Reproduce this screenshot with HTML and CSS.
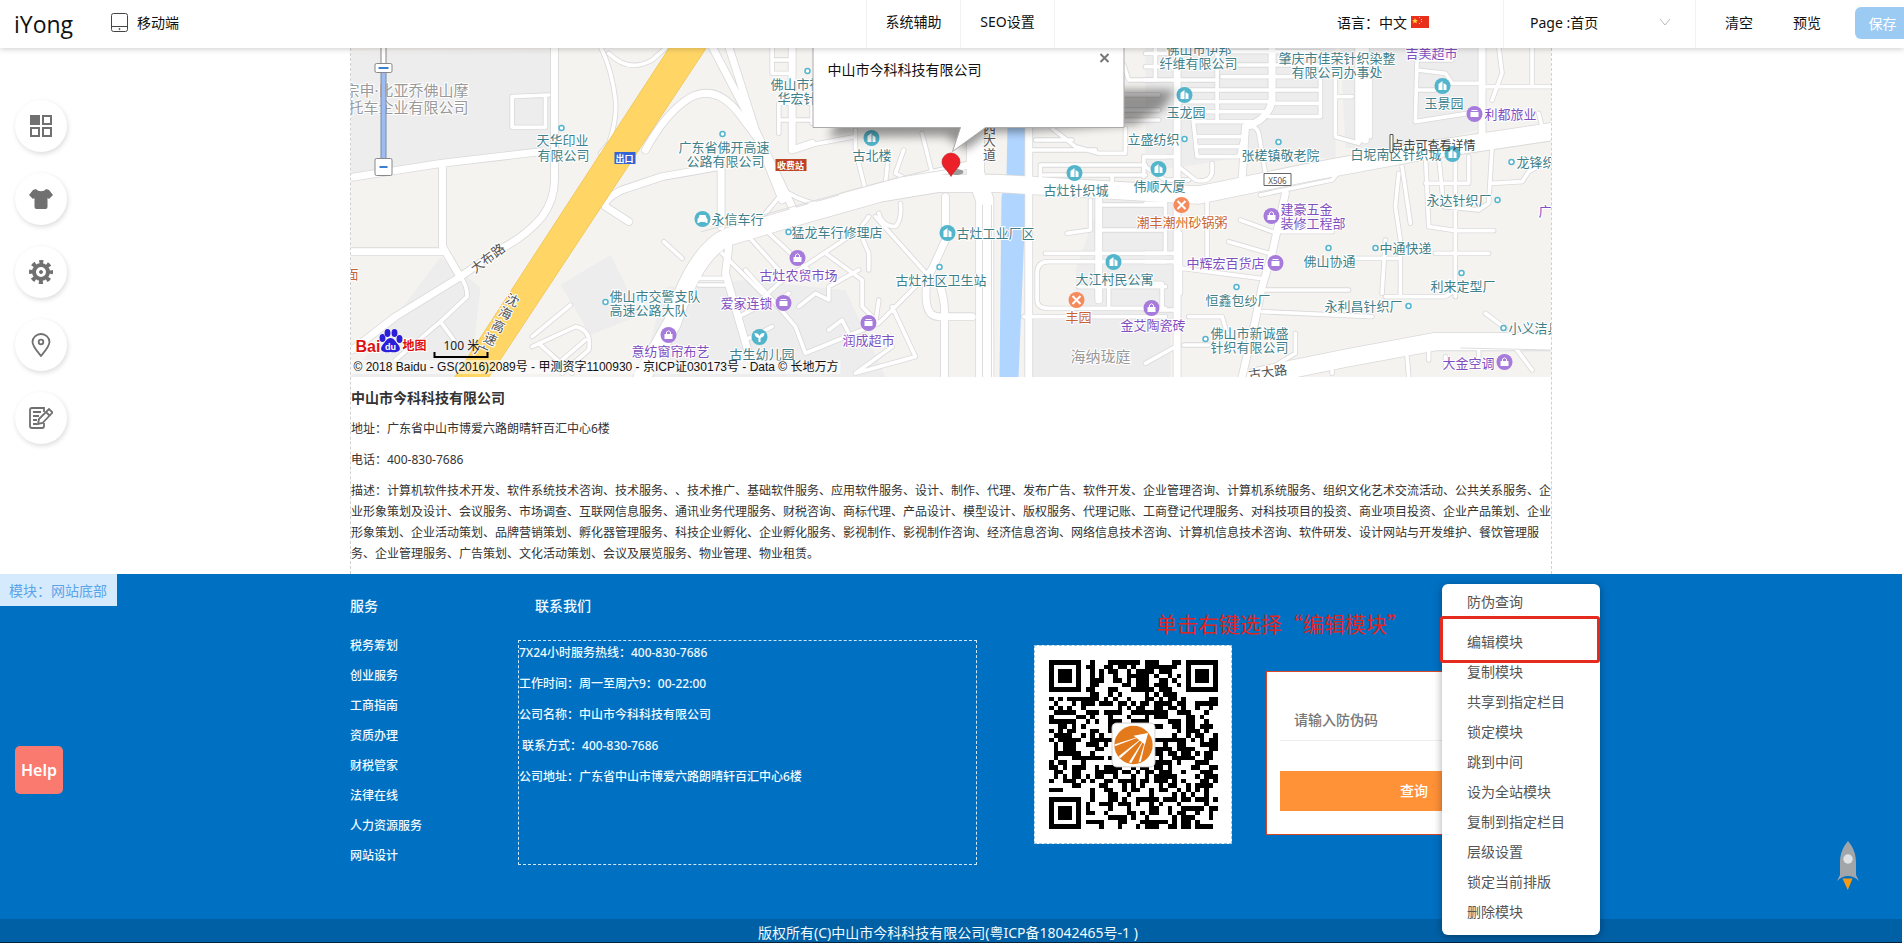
FILE: index.html
```html
<!DOCTYPE html>
<html lang="zh-CN">
<head>
<meta charset="utf-8">
<title>iYong</title>
<link rel="stylesheet" href="styles.css">
</head>
<body>
<header class="topbar">
  <div class="topbar-left">
    <a class="logo" href="#">iYong</a>
    <a class="device" href="#"><svg width="17" height="19" viewBox="0 0 17 19" fill="none" stroke="#444"><rect x=".5" y=".5" width="16" height="18" rx="2"/><path d="M.5 13.5h16"/><circle cx="8.500" cy="16" r=".6"/></svg>移动端</a>
  </div>
  <nav class="tabs"><a href="#">系统辅助</a><a href="#">SEO设置</a></nav>
  <div class="topbar-right">
    <button class="plain lang" type="button">语言：中文 <svg width="18" height="12" viewBox="0 0 18 12"><path fill="#e8301c" d="M0 0h18v12H0z"/><path fill="#ffd83b" d="M4 2l.8 2 2 .1-1.500 1.300.6 2L4 6.300 2.100 7.400l.6-2L1.200 4.100l2-.1zM8 1h1v1H8zM10 3h1v1h-1zM10 5h1v1h-1zM8 7h1v1H8z"/></svg></button>
    <div class="page-pick"><label for="page">Page :</label><select id="page"><option>首页</option></select><svg width="12" height="8" viewBox="0 0 12 8" fill="none" stroke="#bbb"><path d="M1 1l5 6 5-6"/></svg></div>
    <div class="actions"><button class="plain" type="button">清空</button><button class="plain" type="button">预览</button><button class="save" type="button">保存</button></div>
  </div>
</header>

<aside class="tools">
  <button type="button" aria-label="模块"><svg viewBox="0 0 24 24" fill="none" stroke="#707070" stroke-width="2"><path fill="#707070" d="M2 2h8v8H2z"/><path d="M14 2h8v8h-8zM2 14h8v8H2zM14 14h8v8h-8z"/></svg></button>
  <button type="button" aria-label="样式"><svg viewBox="0 0 24 24" fill="#707070"><path d="M7 2c2 3 8 3 10 0l3 1 4 5-4 4-1.500-1v9q0 2-2 2h-9q-2 0-2-2v-9L4 12 0 8l4-5z"/></svg></button>
  <button type="button" aria-label="设置"><svg viewBox="0 0 24 24" fill="none" stroke="#707070"><circle cx="12" cy="12" r="7" stroke-width="4"/><circle cx="12" cy="12" r="10" stroke-width="4" stroke-dasharray="4 3.850" stroke-dashoffset="2"/><circle cx="12" cy="12" r="1.500" fill="#707070"/></svg></button>
  <button type="button" aria-label="位置"><svg viewBox="0 0 24 24" fill="none" stroke="#707070" stroke-width="1.800"><path d="M12 23C7 17 3.500 13 3.500 9a8.500 8 0 0 1 17 0c0 4-3.500 8-8.500 14z"/><circle cx="12" cy="9" r="2.300"/></svg></button>
  <button type="button" aria-label="编辑"><svg viewBox="0 0 24 24" fill="none" stroke="#707070" stroke-width="1.800"><path d="M15 6V2H3Q1 2 1 4v16q0 2 2 2h10q2 0 2-2v-3M4 6h8M4 10h6M4 14h4M4 18h4"/><path d="M9 18l1-5L20 3l3.500 3.500L13.500 17zM17 6l4 4"/></svg></button>
</aside>

<main class="content">
  <svg class="map" viewBox="350 48 1201 329" preserveAspectRatio="xMidYMid slice" role="img" aria-label="地图">
    <defs>
      <g id="roads" transform="translate(345 40) scale(.3333)" fill="none">
        <g class="r-thin">
          <path d="M610 165L500 170V262H600V170M345 712Q365 735 365 770L285 845L150 960M285 845L325 900M765 20Q800 90 810 180Q815 240 790 310L765 340M790 40Q850 100 920 60L960 25M560 890L675 795M560 920L690 860Q740 870 730 930L650 1000M580 910L680 1000M650 960L720 900M955 605L1010 655M1060 735H1140M1060 715H1140M1130 640L1250 760M1180 830L1260 790"/>
          <path transform="translate(1200)" d="M80 20V100M80 100H130M80 60H130M100 190H200V250M100 240H200M100 190V280M140 325L330 290M330 270V330L360 450M475 330L450 400L470 410M530 280L560 400M430 340L420 430M60 520L110 460M130 460Q200 500 260 490M10 590L100 690M60 570L200 700M370 530L340 570L100 730L0 820M390 530L560 720M340 570L370 640V690M240 640L350 720V800L400 850M0 690L90 790L150 860L180 940M160 800L210 760L250 780V740L340 690M400 850L520 730L560 680L600 600M440 800L510 950L330 1000M180 940L400 850M330 1000L440 920M400 520Q410 560 450 560Q470 540 465 490M250 870L290 840L320 900M90 790L130 760M0 900L80 860M400 780L390 850"/>
          <path transform="translate(1200)" d="M885 430V375H1200M895 405H1200M1195 410V350H1260M1100 410V440M1035 480V570L965 580M900 640H1260M1060 495H1260M1060 570H1260M1260 665H910Q875 665 875 700V780Q875 805 910 805H1260M835 830H1260M1090 730V800M1000 740H1260M1140 265V340H1060L990 320L920 265M1135 75L1150 120H1230V20M1135 165H1240M1135 210H1240M1135 240H1240M870 300H980M850 330H1050"/>
          <path transform="translate(2400)" d="M0 40H90M0 80H90M0 120H90M100 120H215V20M100 150H380M100 185H375M100 215H370M150 245H320M215 40V240M230 35H380M230 75H380M230 110H380M380 35H520M380 75H520M380 110H520M380 150H520M380 190H520M370 230H525V60M140 210L155 350H280L300 265Q330 250 340 280L360 400M150 290H300M150 320H290M0 350H90M0 380L60 420H130M570 110V290L640 310M675 100V290M570 170H620M815 60L810 245L1000 215M815 90L900 100L920 130H1010M815 150H870M815 60H920M1060 20L1070 100L1040 180M1010 140H1220M1160 20V140M1180 220L1190 260M200 370V400Q190 430 150 420L100 380"/>
          <path transform="translate(2400)" d="M345 465L560 420L580 395M250 605L370 640M285 540L380 575H560M110 685L345 715M350 750H610M350 815L680 830M130 830H230L245 880M115 915H190M450 880V940L350 1000M760 400L750 500L765 600V770M770 380L795 550M840 340L850 560L930 572H1045M930 350V770M840 430H970V350M880 350L895 500L1000 510L1030 490L1040 320M1040 430L1130 425L1150 395L1215 360M870 640H1030M720 770H900L930 750M720 600L710 760M620 655H760M0 490H60V640M0 640H100M0 665H100M185 480V650M105 580V760M0 730H50V800M0 810H90M560 1000V980M790 1010L785 950M850 960V930M1100 910L1160 990M1020 820L1080 865M900 950V980M1000 930V960M0 970L90 920"/>
        </g>
        <g class="r-mid">
          <path d="M627 20V420Q627 480 590 530Q540 590 460 630L345 710L150 830L20 930M20 412L290 370L585 335M291 385V620L345 712M20 635H290M900 330Q960 220 1030 175Q1110 130 1180 220L1240 300M1100 20L1215 240L1310 480M1150 20L1230 270L1340 500M850 545L780 500Q770 480 830 450L950 410L1120 380M1127 380V560M1150 620L1140 700L1215 960"/>
          <path transform="translate(1200)" d="M140 20V330L200 310M290 470L420 435L560 400L690 370M600 470V600L545 720Q530 830 580 830H680M585 740Q600 790 597 830V1010M850 265V1010M1060 480V780"/>
          <path transform="translate(2400)" d="M95 20V1010M380 20V180Q370 240 300 260L290 420M640 20V300M660 20V300M1010 20V300M420 460L380 640L350 740L330 840L290 1010"/>
        </g>
        <path class="r-main" d="M890 1010L980 850Q1050 630 1150 590L1300 545L1600 460L1780 430H1950L2460 460L2560 465L2900 395L3250 330L3620 275M1890 20V400L1918 480V1010M2730 1010L3000 955L3270 905H3620"/>
      </g>
      <g id="dot"><circle r="2.500" fill="#fff" stroke="#53b5cf" stroke-width="1.500"/></g>
      <g id="bld"><circle r="8" fill="#53b5cb"/><path fill="#fff" d="M-4 4v-6l4-3v9zM1 4v-7l3 2v5z"/></g>
      <g id="car"><circle r="8" fill="#53b5cb"/><path fill="#fff" d="M-3-4h6l1 3 1 1v4h-2v-1h-6v1h-2V0l1-1z"/></g>
      <g id="leaf"><circle r="8" fill="#53b5cb"/><path fill="#fff" d="M-5-4q4 0 5 3 1-3 5-3 0 4-4 5v4h-2V1q-4-1-4-5z"/></g>
      <g id="bag"><circle r="8" fill="#a67bdc"/><path fill="#fff" d="M-4-1h8v5h-8z"/><path fill="none" stroke="#fff" d="M-2-1v-2q2-2.500 4 0v2"/></g>
      <g id="shop"><circle r="8" fill="#a67bdc"/><path fill="#fff" d="M-4-2h8v5h-8zM-3-4h6v1h-6z"/></g>
      <g id="food"><circle r="8" fill="#f58a5c"/><path stroke="#fff" stroke-width="2" d="M-4-4l8 8M4-4l-8 8"/></g>
      <filter id="soft" x="-20%" y="-40%" width="140%" height="180%"><feGaussianBlur stdDeviation="5"/></filter>
    </defs>
    <path fill="#f5f3f0" d="M340 40h1220v345H340z"/>
    <path fill="#ededee" d="M350 53l200-2v100l-200 22zM745 280l100 10 40 87H640l25-90zM350 377l90-120 40 30-10 90zM1100 200h75v130h-100v-60zM1025 320h145v57h-145zM1145 48h190v110h-100l-60 10h-30zM1340 48h145v80l-80 20h-60zM560 285l50-30 30 60-50 20z"/>
    <path fill="#b0d5ff" d="M1007 127h18l-1 50 1 30-7 170h-19l2-180 5-20z"/>
    <use href="#roads" class="casing"/>
    <use href="#roads" class="surface"/>
    <path fill="none" stroke="#ddd" d="M982 205v172M991 205v172M700 232l200-55 50-8M1460 348l90 2"/>
    <path fill="#ffd666" stroke="#f1c95b" d="M670 46h37L487 379h-34z"/>

    <g class="place">
      <text x="536" y="140">天华印业</text><text x="537" y="155">有限公司</text>
      <text x="678" y="147">广东省佛开高速</text><text x="686" y="161">公路有限公司</text>
      <text x="711" y="219">永信车行</text><text x="609" y="296">佛山市交警支队</text><text x="609" y="310">高速公路大队</text>
      <text x="729" y="354">古生幼儿园</text><text x="791" y="232">猛龙车行修理店</text>
      <text x="770" y="84">佛山市禅城</text><text x="777" y="98">华宏针织</text><text x="852" y="155">古北楼</text>
      <text x="956" y="233">古灶工业厂区</text><text x="895" y="280">古灶社区卫生站</text><text x="1043" y="190">古灶针织城</text>
      <text x="1133" y="186">伟顺大厦</text><text x="1127" y="139">立盛纺织</text><text x="1075" y="279">大江村民公寓</text>
      <text x="1166" y="49">佛山市伊邦</text><text x="1159" y="63">纤维有限公司</text><text x="1166" y="112">玉龙园</text>
      <text x="1278" y="58">肇庆市佳荣针织染整</text><text x="1291" y="72">有限公司办事处</text><text x="1424" y="103">玉景园</text>
      <text x="1350" y="154">白坭南区针织城</text><text x="1241" y="155">张槎镇敬老院</text><text x="1516" y="162">龙锋织</text>
      <text x="1426" y="200">永达针织厂</text><text x="1379" y="248">中通快递</text><text x="1303" y="261">佛山协通</text>
      <text x="1430" y="286">利来定型厂</text><text x="1205" y="300">恒鑫包纱厂</text><text x="1324" y="306">永利昌针织厂</text>
      <text x="1508" y="328">小义洁具</text><text x="1210" y="333">佛山市新诚盛</text><text x="1210" y="347">针织有限公司</text>
    </g>
    <g class="place shop">
      <text x="631" y="351">意纺窗帘布艺</text><text x="759" y="275">古灶农贸市场</text><text x="720" y="303">爱家连锁</text><text x="842" y="340">润成超市</text>
      <text x="1120" y="325">金艾陶瓷砖</text><text x="1405" y="53">吉美超市</text><text x="1484" y="114">利都旅业</text><text x="1538" y="211">广</text>
      <text x="1280" y="209">建豪五金</text><text x="1280" y="223">装修工程部</text><text x="1186" y="263">中辉宏百货店</text><text x="1442" y="363">大金空调</text>
    </g>
    <g class="place food"><text x="345" y="274">面</text><text x="1136" y="222">潮丰潮州砂锅粥</text><text x="1065" y="317">丰园</text></g>
    <g class="place area"><text x="468" y="90" text-anchor="end">宗申·比亚乔佛山摩</text><text x="468" y="107" text-anchor="end">托车企业有限公司</text><text x="1070" y="356">海纳珑庭</text></g>
    <g class="place road" text-anchor="middle">
      <text transform="translate(487 258) rotate(-37)">大布路</text><text transform="translate(512 300) rotate(25)">沈</text><text transform="translate(505 313) rotate(25)">海</text><text transform="translate(498 326) rotate(25)">高</text><text transform="translate(490 339) rotate(25)">速</text><text transform="translate(481 351) rotate(25)">广</text>
      <text x="989" y="128">西</text><text x="989" y="140">大</text><text x="989" y="154">道</text><text transform="translate(1267 372) rotate(-8)">古大路</text>
    </g>
    <g>
      <use href="#dot" x="561" y="128"/><use href="#dot" x="722" y="134"/><use href="#dot" x="605" y="302"/><use href="#dot" x="788" y="232"/><use href="#dot" x="807" y="71"/><use href="#dot" x="939" y="267"/><use href="#dot" x="1184" y="139"/><use href="#dot" x="1278" y="142"/><use href="#dot" x="1511" y="162"/><use href="#dot" x="1497" y="200"/><use href="#dot" x="1375" y="248"/><use href="#dot" x="1328" y="248"/><use href="#dot" x="1461" y="273"/><use href="#dot" x="1236" y="287"/><use href="#dot" x="1408" y="306"/><use href="#dot" x="1503" y="328"/><use href="#dot" x="1205" y="339"/>
      <use href="#car" x="702" y="219"/><use href="#leaf" x="759" y="337"/><use href="#bld" x="871" y="138"/><use href="#bld" x="947" y="233"/><use href="#bld" x="1074" y="173"/><use href="#bld" x="1158" y="169"/><use href="#bld" x="1113" y="262"/><use href="#bld" x="1184" y="95"/><use href="#bld" x="1442" y="86"/><use href="#bld" x="1452" y="154"/>
      <use href="#bag" x="668" y="335"/><use href="#bag" x="797" y="258"/><use href="#shop" x="783" y="303"/><use href="#shop" x="868" y="323"/><use href="#bag" x="1151" y="308"/><use href="#shop" x="1474" y="114"/><use href="#bag" x="1271" y="216"/><use href="#shop" x="1275" y="263"/><use href="#bag" x="1504" y="362"/>
      <use href="#food" x="1181" y="205"/><use href="#food" x="1076" y="300"/>
    </g>
    <g class="badge" text-anchor="middle"><path fill="#3563d1" d="M614 152h21v12h-21z"/><text x="624" y="158">出口</text><path fill="#bd4222" d="M775 159h31v12h-31z"/><text x="790" y="165">收费站</text></g>
    <path fill="#fff" stroke="#666" d="M1263.500 173.500h27v12h-27z"/><text class="code" x="1277" y="180" text-anchor="middle">X506</text>
    <path fill="#ffffe1" stroke="#555" d="M1389.500 134.500h3v18h-3z"/><text class="hint" x="1391" y="145">点击可查看详情</text>

    <path fill="#9dbcf0" stroke="#7a8aa8" d="M380.500 70.500h5v88h-5z"/><path fill="#fff" stroke="#888" d="M380.500 45.500h5v18h-5z"/>
    <g fill="#fff" stroke="#888"><rect x="374.500" y="63.500" width="17" height="9" rx="1.500"/><rect x="374.500" y="158.500" width="17" height="17" rx="1.500"/></g>
    <path stroke="#3b7fd1" stroke-width="2" d="M378 68h10M379 167h8"/>

    <g class="baidu"><text class="red" x="355" y="346">Bai</text><text class="red cn" x="402" y="346">地图</text>
      <g fill="#2b1fd8" stroke="#fff" stroke-width="1" paint-order="stroke"><ellipse cx="382" cy="338" rx="3" ry="4"/><ellipse cx="387" cy="333" rx="3" ry="4"/><ellipse cx="394" cy="333" rx="3" ry="4"/><ellipse cx="399" cy="339" rx="3" ry="4"/><path d="M390 338c4 0 5 4 8 7 4 6-1 8-8 7-7 1-12-1-8-7 3-3 4-7 8-7z"/></g>
      <text class="du" x="390" y="347" text-anchor="middle">du</text></g>
    <text class="scale" x="443" y="345">100 米</text><path fill="none" stroke="#000" stroke-width="2" d="M434 352v5h53v-5"/>
    <path fill="#fff" opacity=".5" d="M350 360h490v14H350z"/>
    <text class="copy" x="353" y="367">© 2018 Baidu - GS(2016)2089号 - 甲测资字1100930 - 京ICP证030173号 - Data © 长地万方</text>

    <path fill="#000" opacity=".4" filter="url(#soft)" d="M828 137l12-22 280-25h55l-12 18-28 16-115 8h-30l-25 18-20-14z"/>
    <path fill="#fff" stroke="#aaa" d="M812.500 40v87.500H960l-8 24 33-24h138.500V40z"/>
    <text class="name" x="827" y="69">中山市今科科技有限公司</text>
    <path stroke="#777" stroke-width="2" d="M1100 54l8 8M1108 54l-8 8"/>
    <ellipse cx="956" cy="172" rx="7" ry="3" fill="#777" opacity=".7"/>
    <path fill="#ec2028" stroke="#b91c22" stroke-width=".6" d="M950.500 176.500c-3-6-9-9-9-14.500a9 9 0 0 1 18 0c0 5.500-6 8.500-9 14.500z"/>
  </svg>
  <section class="info">
    <h1>中山市今科科技有限公司</h1>
    <p>地址：广东省中山市博爱六路朗晴轩百汇中心6楼</p>
    <p>电话：400-830-7686</p>
    <p>描述：计算机软件技术开发、软件系统技术咨询、技术服务、、技术推广、基础软件服务、应用软件服务、设计、制作、代理、发布广告、软件开发、企业管理咨询、计算机系统服务、组织文化艺术交流活动、公共关系服务、企业形象策划及设计、会议服务、市场调查、互联网信息服务、通讯业务代理服务、财税咨询、商标代理、产品设计、模型设计、版权服务、代理记账、工商登记代理服务、对科技项目的投资、商业项目投资、企业产品策划、企业形象策划、企业活动策划、品牌营销策划、孵化器管理服务、科技企业孵化、企业孵化服务、影视制作、影视制作咨询、经济信息咨询、网络信息技术咨询、计算机信息技术咨询、软件研发、设计网站与开发维护、餐饮管理服务、企业管理服务、广告策划、文化活动策划、会议及展览服务、物业管理、物业租赁。</p>
  </section>
</main>

<footer class="footer">
  <span class="module-tag">模块：网站底部</span>
  <div class="footer-grid">
    <nav class="services"><h2>服务</h2>
      <ul><li><a href="#">税务筹划</a></li><li><a href="#">创业服务</a></li><li><a href="#">工商指南</a></li><li><a href="#">资质办理</a></li><li><a href="#">财税管家</a></li><li><a href="#">法律在线</a></li><li><a href="#">人力资源服务</a></li><li><a href="#">网站设计</a></li></ul>
    </nav>
    <section class="contact"><h2>联系我们</h2>
      <div class="contact-box"><p>7X24小时服务热线：400-830-7686</p><p>工作时间：周一至周六9：00-22:00</p><p>公司名称：中山市今科科技有限公司</p><p>&nbsp;联系方式：400-830-7686</p><p>公司地址：广东省中山市博爱六路朗晴轩百汇中心6楼</p></div>
    </section>
    <div class="qr"><svg id="qr" viewBox="0 0 37 37" shape-rendering="crispEdges"><path id="qr-path"/><g shape-rendering="auto"><rect x="13.800" y="13.800" width="9.400" height="9.600" rx="1" fill="#fff" stroke="#ccc" stroke-width=".2"/><circle cx="18.500" cy="18.600" r="4.200" fill="#e27a1c"/><path fill="#fff" d="M21.500 16.200l-7.200 2.300.1.400zM21.500 16.200l-6.300 4.900.4.400zM21.500 16.200l-4 6.200.5.200zM21.500 16.200l-1.900 6.200.5-.1z"/><path fill="#fff" d="M21.700 16l-3.200.6 2.500 1.900z"/></g></svg></div>
    <form class="check">
      <input type="text" aria-label="防伪码" placeholder="请输入防伪码">
      <button type="button">查询</button>
    </form>
  </div>
  <p class="copyright">版权所有(C)中山市今科科技有限公司(粤ICP备18042465号-1 )</p>
  <p class="note">单击右键选择“编辑模块”</p>
  <menu class="context">
    <li><button type="button">防伪查询</button></li><li class="marked"><button type="button">编辑模块</button></li><li><button type="button">复制模块</button></li><li><button type="button">共享到指定栏目</button></li><li><button type="button">锁定模块</button></li><li><button type="button">跳到中间</button></li><li><button type="button">设为全站模块</button></li><li><button type="button">复制到指定栏目</button></li><li><button type="button">层级设置</button></li><li><button type="button">锁定当前排版</button></li><li><button type="button">删除模块</button></li>
  </menu>
</footer>

<button class="help" type="button">Help</button>
<a class="rocket" href="#" aria-label="返回顶部"><svg width="22" height="50" viewBox="0 0 22 50"><path fill="#f59a16" d="M5.500 37.500h10L10.800 49z"/><path fill="#a3a6a8" d="M11 0C5 7 3 14 3 22v12L0 40q5-5 11-5t11 5l-3-6V22C19 14 17 7 11 0z"/><circle cx="11" cy="18" r="4.700" fill="#dfe3e5"/></svg></a>
<script src="qr.js"></script>
</body>
</html>
```
FILE: styles.css
```css
* { box-sizing: border-box; }
body {
  margin: 0;
  padding-right: 2px;
  font-family: "Noto Sans", "Noto Sans CJK SC", sans-serif;
  font-size: 12px;
  line-height: 21px;
  color: #333;
  background: #fff;
  overflow: hidden;
  text-spacing-trim: space-all;
}
h1, h2, p, ul, menu { margin: 0; padding: 0; }
ul, menu { list-style: none; }
a { color: inherit; text-decoration: none; }
button, input, select { font: inherit; color: inherit; border: 0; padding: 0; background: none; }

.topbar {
  position: relative;
  z-index: 5;
  display: flex;
  height: 48px;
  margin-right: -2px;
  font-size: 14px;
  color: #111;
  background: #fff;
  box-shadow: 0 1px 6px rgba(0, 0, 0, .2);
}
.topbar-left { flex: 1; display: flex; align-items: center; padding-left: 14px; gap: 38px; }
.logo { font-family: "Open Sans", sans-serif; font-size: 23px; line-height: 48px; }
.device { display: flex; align-items: center; gap: 9px; padding-bottom: 4px; }
.tabs { display: flex; line-height: 44px; border-left: 1px solid #f0f3f5; }
.tabs a { min-width: 94px; padding: 0 18px; text-align: center; border-right: 1px solid #f0f3f5; }
.topbar-right { display: flex; }
.lang { display: flex; align-items: center; gap: 4px; margin: 0 74px 4px 282px; }
.page-pick { display: flex; align-items: center; width: 193px; padding: 0 24px 4px 26px; border: solid #f0f3f5; border-width: 0 1px; }
.page-pick label { white-space: pre; }
.page-pick select { appearance: none; flex: 1; }
.actions { display: flex; align-items: center; gap: 40px; padding: 0 0 4px 29px; }
.save { width: 49px; height: 32px; margin: 2px 0 0 -6px; padding-left: 6px; color: #fff; background: #9bcaf2; border-radius: 6px 0 0 6px; }

.tools { position: fixed; z-index: 4; left: 15px; top: 100px; display: grid; gap: 21px; }
.tools button { display: grid; place-items: center; width: 52px; height: 52px; border-radius: 50%; background: #fff; box-shadow: 1px 2px 5px rgba(0, 0, 0, .14); }
.tools svg { width: 24px; height: 24px; }

.content { max-width: 1202px; margin: 0 auto; border: dashed #d0d0d0; border-width: 0 1px; }
.map { display: block; width: 100%; height: 329px; }
.map text { dominant-baseline: central; }
.casing { stroke: #dadada; }
.surface { stroke: #fff; }
.r-thin, .r-mid, .r-main { stroke-linejoin: round; stroke-linecap: round; }
.casing { --edge: 5px; }
.surface { --edge: 0px; }
.r-thin { stroke-width: calc(11px + var(--edge)); }
.r-mid { stroke-width: calc(21px + var(--edge)); }
.r-main { stroke-width: calc(52px + var(--edge)); }
.place { font-size: 13px; fill: #3f7f8a; stroke: #fff; stroke-width: 2px; paint-order: stroke; }
.place.shop { fill: #7f4fbf; }
.place.food { fill: #c8652e; }
.place.area { font-size: 15px; fill: #999; }
.place.road { fill: #555; }
.badge { font-size: 9px; font-weight: 700; fill: #fff; }
.code { font-size: 8px; fill: #555; }
.hint { font-size: 12px; fill: #444; }
.name { font-size: 14px; fill: #111; }
.scale { font-size: 12px; fill: #222; }
.copy { font-family: "Liberation Sans", "Noto Sans CJK SC", sans-serif; font-size: 12px; fill: #111; }
.baidu { font-family: "Liberation Sans", "Noto Sans CJK SC", sans-serif; font-weight: 700; }
.red { font-size: 16px; fill: #dd1111; stroke: #fff; stroke-width: 2px; paint-order: stroke; }
.red.cn { font-size: 12px; }
.du { font-size: 9px; fill: #fff; }

.info { display: grid; gap: 10px; padding: 10px 0; }
.info p { margin-right: -1px; word-break: break-all; }
.info h1 { font-size: 14px; line-height: 21px; font-weight: 700; }

.footer { position: relative; color: #eefaff; background: #0070c2; }
.module-tag { position: absolute; left: 0; top: 0; padding: 6px 10px 5px 9px; font-size: 14px; color: #5aa5ea; background: #d5eafc; }
.footer-grid { display: flex; max-width: 1202px; height: 345px; margin: 0 auto; font-weight: 500; }
.footer-grid h2 { padding-top: 21px; font-size: 14px; line-height: 22px; font-weight: 500; }
.services { width: 168px; }
.services ul { padding-top: 14px; line-height: 30px; }
.contact { width: 459px; }
.contact h2 { padding-left: 17px; }
.contact-box { display: grid; gap: 10px; align-content: start; height: 225px; margin-top: 23px; padding-top: 1px; border: 1px dashed #cfeaff; }
.qr { width: 198px; height: 199px; margin: 71px 34px 0 57px; padding: 14px; background: #fff; border: 1px dashed #9cc8ea; }
.qr svg { display: block; width: 169px; height: 169px; }
.check { flex: 1; height: 164px; margin-top: 97px; padding: 27px 3px 22px 13px; background: #fff; border: 1px solid #d9472b; font-size: 14px; }
.check input { display: block; width: 100%; height: 42px; padding: 0 14px; border-bottom: 1px solid #eee; }
.check input::placeholder { color: #777; }
.check button { display: block; width: 100%; height: 40px; margin-top: 30px; padding-bottom: 2px; color: #fff; background: #ff9137; }
.copyright { height: 25px; padding: 3px 6px 0 0; font-size: 14px; text-align: center; background: #0060a6; border-bottom: 2px solid #06233c; }
.note { position: absolute; left: 1156px; top: 33px; font-size: 21px; line-height: 32px; color: #e0241f; font-family: "Noto Sans CJK SC", sans-serif; white-space: nowrap; }
.context { position: absolute; left: 1442px; top: 10px; width: 158px; padding: 3px 0 8px; color: #555; background: #fff; border-radius: 6px; box-shadow: 0 2px 8px rgba(0, 0, 0, .35); font-size: 14px; }
.context li { position: relative; height: 30px; }
.context button { width: 100%; padding-left: 25px; line-height: 30px; text-align: left; }
.context .marked { margin-top: 10px; }
.marked::after { content: ""; position: absolute; inset: -11px 0 -6px -2px; border: 3px solid #e52a1e; border-radius: 3px; pointer-events: none; }

.help { position: fixed; left: 15px; bottom: 149px; width: 48px; height: 48px; font-size: 16px; font-weight: 600; color: #fff; background: #fa7a70; border-radius: 5px; }
.rocket { position: fixed; right: 45px; bottom: 52px; }
.rocket svg { display: block; }
```
FILE: qr.js
```js
const SIZE = 37;
let seed = 20181;

function nextBit() {
  seed = (seed * 1103515245 + 12345) % 2147483648;
  return (seed >> 16) % 100 < 52;
}

function squareModule(x, y, left, top, size) {
  const dx = x - left;
  const dy = y - top;
  if (dx < -1 || dy < -1 || dx > size || dy > size) return null;
  const mid = (size - 1) / 2;
  const ring = Math.max(Math.abs(dx - mid), Math.abs(dy - mid));
  if (size === 7) return ring === 3 || ring <= 1;
  return ring === 2 || ring === 0;
}

let d = "";
for (let y = 0; y < SIZE; y++) {
  for (let x = 0; x < SIZE; x++) {
    let on = nextBit();
    for (const [l, t, s] of [[0, 0, 7], [30, 0, 7], [0, 30, 7]]) {
      const fixed = squareModule(x, y, l, t, s);
      if (fixed !== null) on = fixed;
    }
    if (on) d += `M${x} ${y}h1v1h-1z`;
  }
}
document.getElementById("qr-path").setAttribute("d", d);
```
